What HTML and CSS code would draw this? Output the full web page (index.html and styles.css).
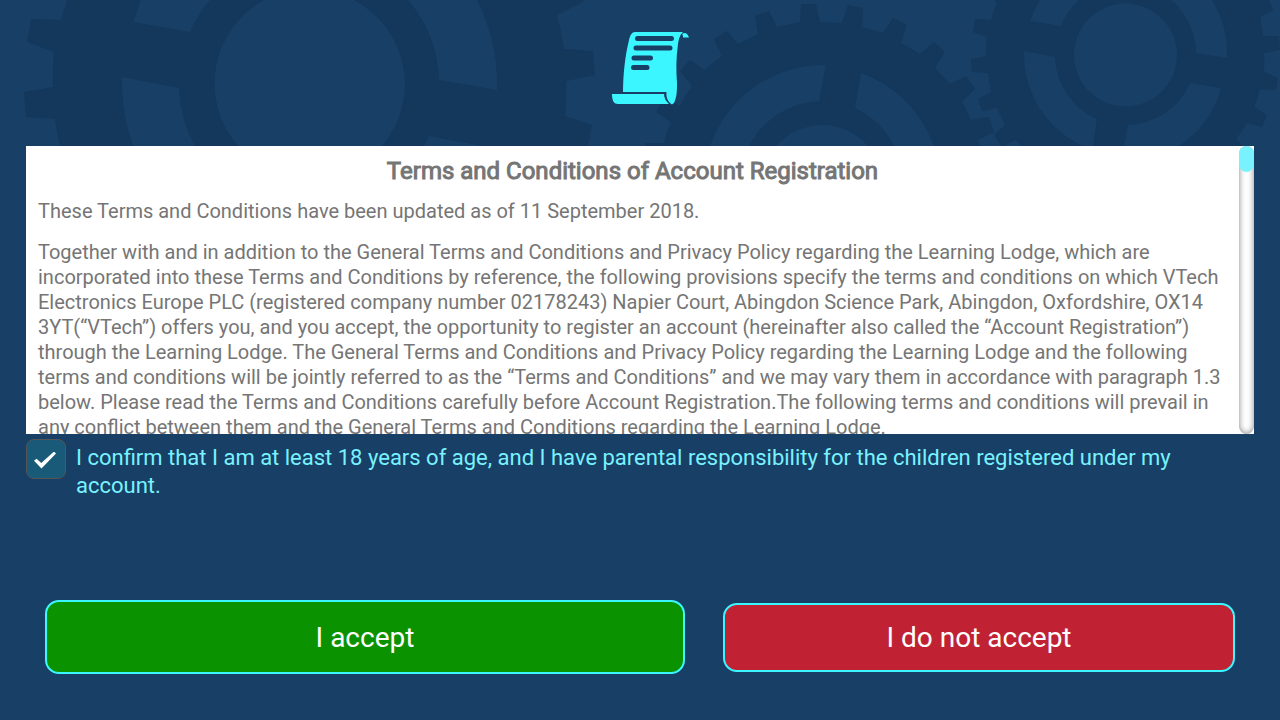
FILE: index.html
```
<!DOCTYPE html>
<html lang="en">
<head>
  <meta charset="UTF-8">
  <meta name="viewport" content="width=device-width, initial-scale=1.0">
  <title>Terms and Conditions of Account Registration</title>
  <link rel="stylesheet" href="styles.css">
</head>
<body>
  <header class="header">
    <!-- Gears behind the header -->
    <svg class="gears" viewBox="0 0 1280 146" preserveAspectRatio="xMidYMin slice" aria-hidden="true">
      <path fill-rule="evenodd" d="M67 0L61 20L31 19L27 42L54 52A257 257 0 0 0 53 87L24 92L26 117L55 119A257 257 0 0 0 60 146H588L592 125L565 116A257 257 0 0 0 566 81L595 75L593 51L564 49A257 257 0 0 0 557 15L583 2L584 0Z
        M141 0L133 22L190 32A130 130 0 0 1 210 0Z
        M122 77L179 88A130 130 0 0 0 195 146H133A188 188 0 0 1 122 77Z
        M408 0A130 130 0 0 1 439 80L497 90A188 188 0 0 0 477 0Z
        M429 136L482 146H424Z
        M264 0A95 95 0 0 0 238 146H382A95 95 0 0 0 354 0Z"/>
      <path fill-rule="evenodd" d="M645 146V143H664A164 164 0 0 1 671 122L656 112L664 98L680 106A164 164 0 0 1 692 86L680 71L690 60L705 70A164 164 0 0 1 722 56L714 39L727 31L738 44L758 34L755 16L769 11L777 27L800 22L801 4L816 4L820 22L842 23L848 5L863 8L862 27L883 33L893 18L907 25L901 43L920 54L934 42L945 52L935 68L950 84L966 76L975 89L962 101L971 120L989 117L994 132L978 140L980 146Z
        M710 146A120 120 0 0 1 826 65L819 101A84 84 0 0 0 749 146Z
        M861 73L855 108A84 84 0 0 1 894 146H934A120 120 0 0 0 861 73Z
        M776 146A61 61 0 0 1 868 146Z"/>
      <path fill-rule="evenodd" d="M994 0L997 2A139 139 0 0 0 991 20L975 19L973 32L987 37A139 139 0 0 0 986 56L971 59L972 72L988 73A139 139 0 0 0 991 92L978 99L982 111L997 108L1005 125L994 135L1001 146H1004L1016 140L1021 146H1243L1236 139A139 139 0 0 0 1247 123L1262 127L1267 115L1254 107A139 139 0 0 0 1260 89L1276 90L1278 78L1264 72A139 139 0 0 0 1264 53L1280 50L1279 36L1263 36A139 139 0 0 0 1260 17L1273 10L1269 0Z
        M1040 0A101 101 0 0 0 1030 21L1061 26A70 70 0 0 1 1079 0Z
        M1024 51L1055 57A70 70 0 0 0 1097 119L1093 146H1083A101 101 0 0 1 1024 51Z
        M1128 125A70 70 0 0 0 1190 83L1221 88A101 101 0 0 1 1179 146H1124Z
        M1171 0A70 70 0 0 1 1196 53L1227 58A101 101 0 0 0 1212 0Z
        M1074 55a51.500 51.500 0 1 1 103 0a51.500 51.500 0 1 1 -103 0Z"/>
    </svg>
    <svg class="scroll-icon" viewBox="0 0 78 74" aria-hidden="true">
      <path fill="#3cf6ff" d="M23 1H71C68 4 67 7 66 13C64 27 64 40 65 52C65 59 65 66 62 72L60 73.500C56 71 54 67 54.500 61H11C11 44 13 25 17 9C18 4 20 1 23 1Z"/>
      <path fill="#3cf6ff" d="M72 2C75 2 76 4 77 6.500H71C71 5 71 4 70 3Z"/>
      <path fill="#3cf6ff" d="M0 63H52C52 67 54 70 57 73H6C2 73 0 70 0 63Z"/>
      <path stroke="#183f65" stroke-width="5" stroke-linecap="round" d="M25.500 7.500H59.500M24 17H58M22 27H38.500M21.500 36.500H35"/>
    </svg>
  </header>

  <main class="content">
    <div class="terms">
      <div class="terms-text">
        <h1>Terms and Conditions of Account Registration</h1>
        <p>These Terms and Conditions have been updated as of 11 September 2018.</p>
        <p>Together with and in addition to the General Terms and Conditions and Privacy Policy regarding the Learning Lodge, which are incorporated into these Terms and Conditions by reference, the following provisions specify the terms and conditions on which VTech Electronics Europe PLC (registered company number 02178243) Napier Court, Abingdon Science Park, Abingdon, Oxfordshire, OX14 3YT(“VTech”) offers you, and you accept, the opportunity to register an account (hereinafter also called the “Account Registration”) through the Learning Lodge. The General Terms and Conditions and Privacy Policy regarding the Learning Lodge and the following terms and conditions will be jointly referred to as the “Terms and Conditions” and we may vary them in accordance with paragraph 1.3 below. Please read the Terms and Conditions carefully before Account Registration.The following terms and conditions will prevail in any conflict between them and the General Terms and Conditions regarding the Learning Lodge.</p>
      </div>
      <div class="scrollbar"><div class="thumb"></div></div>
    </div>

    <div class="confirm">
      <input type="checkbox" id="confirm" checked>
      <label for="confirm">I confirm that I am at least 18 years of age, and I have parental responsibility for the children registered under my account.</label>
    </div>
  </main>

  <div class="buttons">
    <button type="button" class="button accept">I accept</button>
    <button type="button" class="button decline">I do not accept</button>
  </div>
</body>
</html>
```
FILE: styles.css
```
* {
  box-sizing: border-box;
}
body {
  font-family: Roboto, sans-serif;
  background-color: #183f65;
  margin: 0;
  min-height: 100vh;
  display: flex;
  flex-direction: column;
}
.header {
  position: relative;
  height: 146px;
  padding-top: 31px;
  display: flex;
  justify-content: center;
  align-items: flex-start;
  padding-left: 22px;
}
/* Decoration only, sits under the icon */
.gears {
  position: absolute;
  top: 0;
  left: 0;
  width: 100%;
  height: 100%;
  fill: #14375c;
}
.scroll-icon {
  position: relative;
  width: 78px;
  height: 74px;
}
.content {
  padding: 0 26px;
}
.terms {
  display: flex;
  height: 288px;
  background-color: white;
}
.terms-text {
  flex: 1;
  padding: 10px 12px 0;
  overflow-y: auto;
  scrollbar-width: none;
  color: #757575;
  font-size: 20px;
  line-height: 25px;
}
.terms-text h1 {
  margin: 0 0 13px;
  font-size: 24px;
  line-height: 30px;
  font-weight: normal;
  -webkit-text-stroke: 1px #757575;
  text-align: center;
}
.terms-text p {
  margin: 0 0 16px;
}
.scrollbar {
  width: 15px;
  border-radius: 8px;
  background-color: white;
  box-shadow: inset 0 0 6px rgba(0, 0, 0, 0.5);
}
.thumb {
  height: 26px;
  border-radius: 8px;
  background-color: #78f2ff;
}
.confirm {
  display: flex;
  align-items: flex-start;
  gap: 10px;
  padding-top: 5px;
  color: #78f2ff;
  font-size: 22px;
  line-height: 28px;
}
.confirm input {
  appearance: none;
  flex: none;
  width: 40px;
  height: 40px;
  margin: 0;
  padding: 2px 2px 0 0;
  border: 1px solid #555;
  border-radius: 8px;
  background-color: #185a78;
  display: grid;
  place-items: center;
}
.confirm input:checked::before {
  content: "";
  width: 22px;
  height: 17px;
  background-color: white;
  clip-path: polygon(0 54%, 12% 42%, 33% 68%, 91% 0, 100% 12%, 34% 100%);
}
.confirm label {
  padding-top: 5px;
}
.buttons {
  display: flex;
  align-items: center;
  justify-content: center;
  gap: 38px;
  margin-top: auto;
  padding-bottom: 46px;
}
.button {
  border: 2px solid #3cf6ff;
  border-radius: 14px;
  color: white;
  font-family: inherit;
  font-size: 28px;
  cursor: pointer;
}
.accept {
  width: 50%;
  height: 74px;
  background-color: #0b9200;
}
.decline {
  width: 40%;
  height: 69px;
  background-color: #c02234;
}
```
